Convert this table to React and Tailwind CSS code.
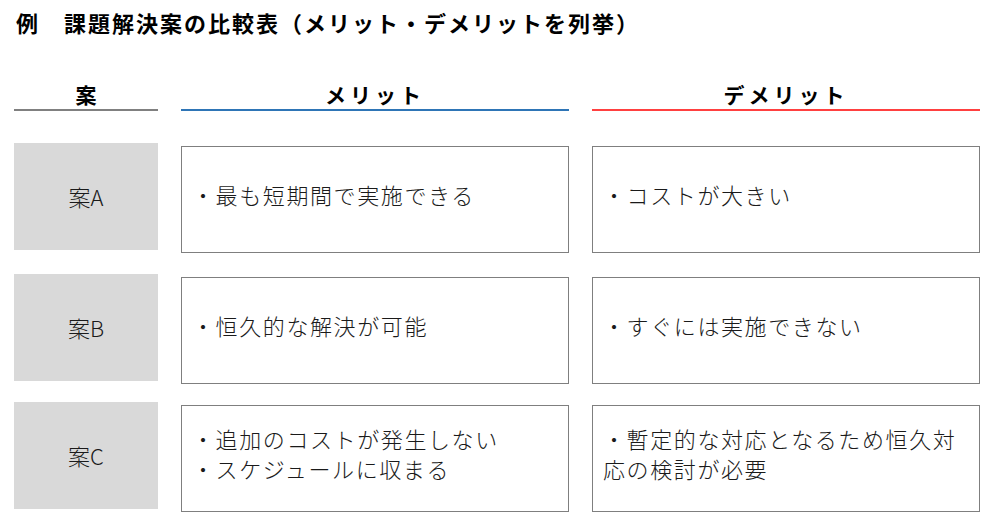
import React from 'react';

const rows = [
    { label: '案A', merit: ['・最も短期間で実施できる'], demerit: ['・コストが大きい'], gap: 'mt-0' },
    { label: '案B', merit: ['・恒久的な解決が可能'], demerit: ['・すぐには実施できない'], gap: 'mt-[21px]' },
    { label: '案C', merit: ['・追加のコストが発生しない', '・スケジュールに収まる'], demerit: ['・暫定的な対応となるため恒久対', '応の検討が必要'], gap: 'mt-[18px]' },
];

const font = { fontFamily: '"Noto Sans CJK JP", "Noto Sans", sans-serif' };

const TextBox = ({ lines }) => (
    <div className="mt-[3px] h-[107px] border-[1.5px] border-[#7f7f7f] bg-white flex flex-col justify-center pl-[10px] pb-[10px] text-[22px] leading-[30px] tracking-[1.6px] font-light text-[#1a1a1a]">
        {lines.map((l, i) => <div key={i} className="whitespace-nowrap">{l}</div>)}
    </div>
);

const Header = ({ children, line, spaced }) => (
    <div className="flex flex-col">
        <div className={`h-[30px] text-center text-[21px] font-bold leading-[30px] ${spaced ? 'tracking-[4px]' : ''}`}>{children}</div>
        <div className={`h-[1.5px] ${line}`} />
    </div>
);

export default function App() {
    return (
        <div className="w-[981px] h-[513px] bg-white overflow-hidden" style={font}>
            <div className="h-[44px] flex items-center pl-[16px] text-[22px] font-bold tracking-[2px] text-black">
                例　課題解決案の比較表（メリット・デメリットを列挙）
            </div>

            <div className="grid grid-cols-[144px_388px_388px] gap-x-[23px] pl-[14px] mt-[35px]">
                <Header line="bg-[#808080]">案</Header>
                <Header line="bg-[#2e75b6]" spaced>メリット</Header>
                <Header line="bg-[#ff4040]" spaced>デメリット</Header>
            </div>

            <div className="flex flex-col pl-[14px] mt-[32px]">
                {rows.map((r) => (
                    <div key={r.label} className={`grid grid-cols-[144px_388px_388px] gap-x-[23px] items-start ${r.gap}`}>
                        <div className="h-[107px] bg-[#d9d9d9] flex items-center justify-center text-[22px] font-light text-[#1a1a1a]">{r.label}</div>
                        <TextBox lines={r.merit} />
                        <TextBox lines={r.demerit} />
                    </div>
                ))}
            </div>
        </div>
    );
}
